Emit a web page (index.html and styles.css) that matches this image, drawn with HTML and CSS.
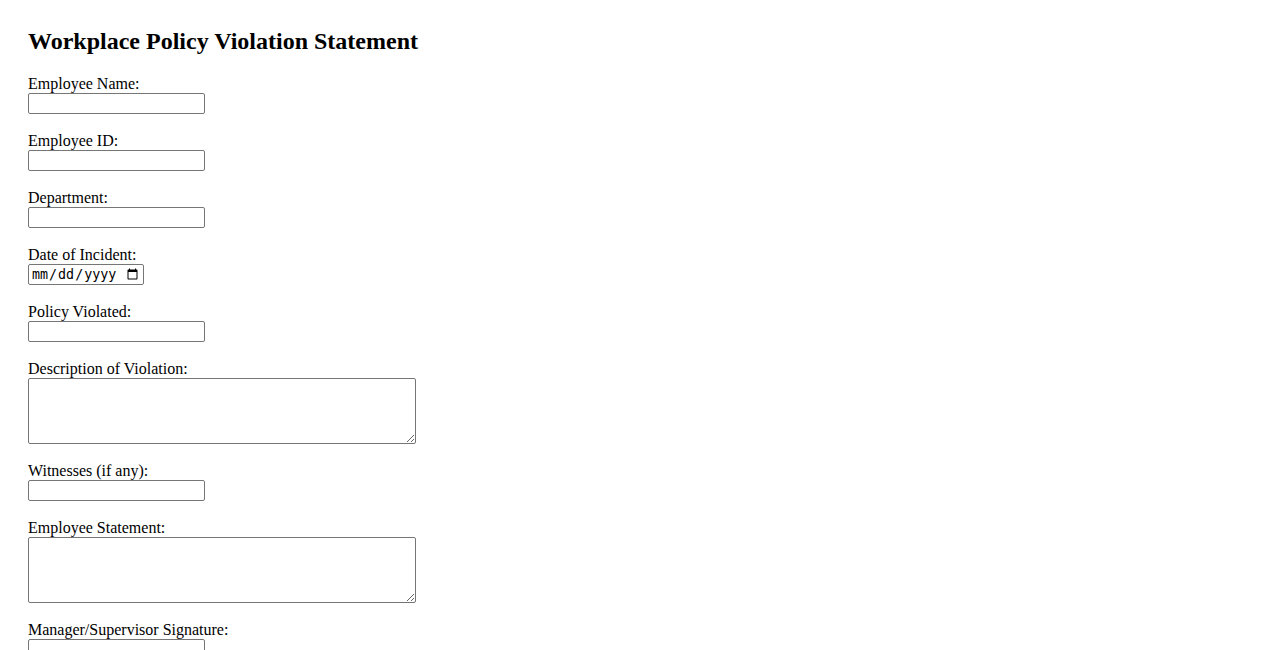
FILE: index.html
```html
<!DOCTYPE html>
<html lang="en">
<head>
<meta charset="utf-8">
<title>Workplace Policy Violation Statement</title>
<link rel="stylesheet" href="styles.css">
</head>
<body>
<h2 class="title">Workplace Policy Violation Statement</h2>
<form class="form">
  <div class="field">
    <label class="label" for="name">Employee Name:</label>
    <input class="text" type="text" id="name">
  </div>
  <div class="field">
    <label class="label" for="eid">Employee ID:</label>
    <input class="text" type="text" id="eid">
  </div>
  <div class="field">
    <label class="label" for="dept">Department:</label>
    <input class="text" type="text" id="dept">
  </div>
  <div class="field">
    <label class="label" for="date">Date of Incident:</label>
    <input class="date" type="date" id="date">
  </div>
  <div class="field">
    <label class="label" for="policy">Policy Violated:</label>
    <input class="text" type="text" id="policy">
  </div>
  <div class="field">
    <label class="label" for="desc">Description of Violation:</label>
    <textarea class="area" id="desc"></textarea>
  </div>
  <div class="field">
    <label class="label" for="wit">Witnesses (if any):</label>
    <input class="text" type="text" id="wit">
  </div>
  <div class="field">
    <label class="label" for="stmt">Employee Statement:</label>
    <textarea class="area" id="stmt"></textarea>
  </div>
  <div class="field">
    <label class="label" for="sig">Manager/Supervisor Signature:</label>
    <input class="text" type="text" id="sig">
  </div>
  <div class="field">
    <label class="label" for="sdate">Date:</label>
    <input class="date" type="date" id="sdate">
  </div>
  <div class="field">
    <button class="submit" type="submit">Submit</button>
  </div>
</form>
</body>
</html>
```
FILE: styles.css
```css
html, body {
  background: #ffffff;
}
body {
  margin: 0;
  padding: 28px;
  font-family: "Liberation Serif", "Times New Roman", serif;
  font-size: 16px;
  color: #000000;
}
.title {
  margin: 0 0 19px 0;
  font-size: 24px;
  line-height: 27.6px;
  font-weight: bold;
}
.form {
  display: flex;
  flex-direction: column;
  align-items: flex-start;
  gap: 17.6px;
}
.field {
  display: flex;
  flex-direction: column;
  align-items: flex-start;
}
.label {
  display: block;
  line-height: 18.4px;
}
.text,
.date,
.area {
  box-sizing: border-box;
  margin: 0;
  border: 1px solid #767676;
  border-radius: 2px;
  background: #ffffff;
}
.text {
  width: 177px;
  height: 21px;
  padding: 1px 2px;
  font-family: "Liberation Sans", Arial, sans-serif;
  font-size: 13.33px;
}
.date {
  width: 116px;
  height: 21px;
  padding: 1px 2px;
  font-family: "DejaVu Sans Mono", monospace;
  font-size: 13.33px;
}
.area {
  width: 388px;
  height: 66px;
  padding: 2px;
  font-family: "Liberation Mono", monospace;
  font-size: 13.33px;
}
.submit {
  font-family: "Liberation Sans", Arial, sans-serif;
  font-size: 13.33px;
}
```
